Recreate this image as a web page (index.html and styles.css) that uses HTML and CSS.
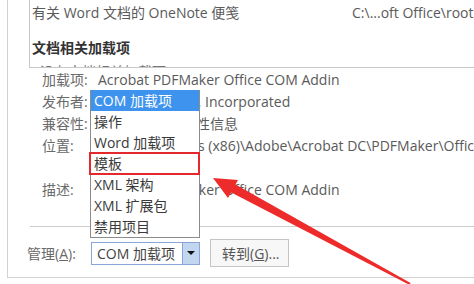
FILE: index.html
```html
<!DOCTYPE html>
<html lang="zh-CN">
<head>
    <meta charset="UTF-8">
    <title>COM 加载项</title>
    <link rel="stylesheet" href="styles.css">
</head>
<body>
    <div class="dialog">
        <div class="addin-list">
            <div class="list-row">
                <span class="col-name">有关 Word 文档的 OneNote 便笺</span>
                <span class="col-path">C:\...oft Office\root</span>
            </div>
            <div class="list-group">文档相关加载项</div>
            <div class="list-empty">没有文档相关加载项</div>
        </div>

        <div class="details">
            <div class="label">加载项:</div><div class="value">Acrobat PDFMaker Office COM Addin</div>
            <div class="label">发布者:</div><div class="value">Adobe Systems, Incorporated</div>
            <div class="label">兼容性:</div><div class="value">没有可用的兼容性信息</div>
            <div class="label">位置:</div><div class="value">C:\Program Files (x86)\Adobe\Acrobat DC\PDFMaker\Office</div>
            <div class="label desc">描述:</div><div class="value desc">Acrobat PDFMaker Office COM Addin</div>
        </div>

        <div class="separator"></div>

        <div class="manage">
            <span class="manage-label">管理(<u>A</u>):</span>
            <div class="select">
                <span class="select-text">COM 加载项</span>
                <span class="select-btn"><span class="caret"></span></span>
            </div>
            <button class="go-btn">转到(<u>G</u>)...</button>
        </div>

        <!-- open dropdown -->
        <ul class="dropdown">
            <li class="active">COM 加载项</li>
            <li>操作</li>
            <li>Word 加载项</li>
            <li>模板</li>
            <li>XML 架构</li>
            <li>XML 扩展包</li>
            <li>禁用项目</li>
        </ul>
        <div class="mark"></div>
    </div>

    <svg class="arrow" width="474" height="284" viewBox="0 0 474 284">
        <polygon points="213,178 238,180 228,198" fill="#ee2b2b"/>
        <polygon points="229.4,191.6 233.8,183.4 410.5,283.1 409.5,284.9" fill="#ee2b2b"/>
    </svg>
</body>
</html>
```

FILE: styles.css
```css
body {
    margin: 0;
    width: 474px;
    height: 284px;
    overflow: hidden;
    position: relative;
    background-color: #fff;
    font-family: "Open Sans", "Noto Sans CJK SC", sans-serif;
    font-size: 14px;
    color: #5a5a5a;
    white-space: nowrap;
}

.dialog {
    position: relative;
    margin-left: 7px;
    height: 277px;
    border-left: 1px solid #d2d2d2;
    border-bottom: 1px solid #d2d2d2;
}

.addin-list {
    margin-left: 21px;
    height: 67px;
    padding-left: 2px;
    border-left: 1px solid #c8c8c8;
    border-bottom: 1px solid #c8c8c8;
    overflow: hidden;
}

.list-row {
    display: flex;
    height: 24px;
    align-items: center;
}

.col-name {
    flex-shrink: 0;
    width: 320px;
}

.col-path {
    flex-shrink: 0;
}

.list-group {
    margin-top: 14px;
    line-height: 20px;
    font-weight: bold;
    color: #333;
}

.list-empty {
    margin-top: 4px;
    padding-left: 8px;
    line-height: 20px;
    color: #777;
}

.details {
    display: grid;
    grid-template-columns: 56px auto;
    margin-left: 34px;
    padding-top: 1px;
    line-height: 22px;
}

.label {
    color: #6a6a6a;
}

.details .desc {
    margin-top: 22px;
}

.separator {
    margin: 25px 0 0 22px;
    border-top: 1px solid #cdcdcd;
}

.manage {
    display: flex;
    align-items: center;
    height: 28px;
    margin: 12px 0 0 19px;
}

.manage-label {
    width: 64px;
    color: #6a6a6a;
}

.select {
    display: flex;
    box-sizing: border-box;
    width: 109px;
    height: 23px;
    border: 1px solid #8aa6d6;
    background-color: #fff;
}

.select-text {
    flex: 1;
    padding-left: 5px;
    line-height: 21px;
    color: #444;
}

.select-btn {
    display: flex;
    width: 16px;
    align-items: center;
    justify-content: center;
    background-color: #c2d6f0;
    border-left: 1px solid #8aa6d6;
}

.caret {
    border-left: 4px solid transparent;
    border-right: 4px solid transparent;
    border-top: 4px solid #111;
}

.go-btn {
    box-sizing: border-box;
    width: 79px;
    height: 28px;
    margin-left: 10px;
    padding: 0 0 0 11px;
    text-align: left;
    font-family: inherit;
    font-size: 14px;
    color: #555;
    background-color: #f7f7f7;
    border: 1px solid #c4c4c4;
}

.dropdown {
    position: absolute;
    left: 82px;
    top: 90px;
    width: 110px;
    box-sizing: border-box;
    margin: 0;
    padding: 0;
    list-style-type: none;
    background-color: #fff;
    border: 1px solid #8c8c8c;
    border-top: none;
}

.dropdown li {
    height: 21px;
    line-height: 21px;
    padding-left: 3px;
    color: #3a3a3a;
}

.dropdown li.active {
    background-color: #3d93ee;
    color: #fff;
}

.mark {
    position: absolute;
    left: 81px;
    top: 152px;
    width: 111px;
    height: 23px;
    box-sizing: border-box;
    border: 2px solid #e4282c;
}

.arrow {
    position: absolute;
    left: 0;
    top: 0;
    pointer-events: none;
}
```
